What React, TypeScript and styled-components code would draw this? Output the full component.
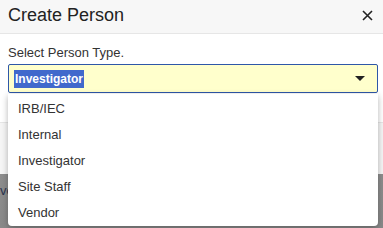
import styled, { createGlobalStyle } from 'styled-components';

const GlobalStyle = createGlobalStyle`
body {
  margin: 0;
  background: #8b8b8b;
  font-family: "Liberation Sans", Arial, sans-serif;
}
`;

const options = ['IRB/IEC', 'Internal', 'Investigator', 'Site Staff', 'Vendor'];

function App() {
  return (
    <>
      <GlobalStyle />
      <Page>
        <Modal>
          <Header>
            <Title>Create Person</Title>
            <CloseBtn aria-label="Close">
              <svg width="11" height="11" viewBox="0 0 11 11">
                <path d="M1 1L10 10M10 1L1 10" stroke="#222" strokeWidth="1.6" />
              </svg>
            </CloseBtn>
          </Header>
          <Body>
            <Label>Select Person Type.</Label>
            <SelectWrap>
              <SelectBox>
                <Selected>Investigator</Selected>
                <Caret />
              </SelectBox>
              <Menu>
                {options.map((o) => (
                  <Option key={o}>{o}</Option>
                ))}
              </Menu>
            </SelectWrap>
          </Body>
          <Footer />
        </Modal>
        <Backdrop>
          <BehindText>ve</BehindText>
        </Backdrop>
      </Page>
    </>
  );
}

const Page = styled.div`
width: 383px;
height: 228px;
overflow: hidden;
`;

const Modal = styled.div`
background: #fff;
`;

const Header = styled.div`
box-sizing: border-box;
height: 34px;
background: #f7f7f7;
border-bottom: 1px solid #e6e6e6;
display: flex;
align-items: center;
justify-content: space-between;
padding: 0 10px 0 8px;
`;

const Title = styled.h1`
margin: 0;
font-size: 18px;
font-weight: 400;
color: #222;
line-height: 20px;
margin-top: -4px;
`;

const CloseBtn = styled.button`
border: 0;
background: transparent;
padding: 0;
display: flex;
margin-top: -3px;
`;

const Body = styled.div`
padding: 11px 5px 29px 8px;
`;

const Label = styled.div`
font-size: 13px;
color: #333;
line-height: 16px;
margin-bottom: 3px;
`;

const SelectWrap = styled.div`
position: relative;
`;

const SelectBox = styled.div`
box-sizing: border-box;
height: 29px;
border: 1px solid #2e57a8;
border-radius: 2px;
background: #ffffcc;
display: flex;
align-items: center;
justify-content: space-between;
padding: 0 12px 0 5px;
`;

const Selected = styled.span`
background: #4169cc;
color: #fff;
font-weight: 700;
font-size: 12px;
line-height: 18px;
padding: 0 1px;
`;

const Caret = styled.span`
width: 0;
height: 0;
border-left: 5px solid transparent;
border-right: 5px solid transparent;
border-top: 5px solid #222;
`;

const Menu = styled.div`
position: absolute;
top: 30px;
left: 0;
right: 0;
background: #fff;
border-radius: 0 0 4px 4px;
box-shadow: 0 2px 6px rgba(0, 0, 0, 0.3);
padding: 1px 0 1px;
z-index: 2;
`;

const Option = styled.div`
height: 26px;
display: flex;
align-items: center;
padding-left: 10px;
font-size: 13px;
color: #333;
`;

const Footer = styled.div`
height: 51px;
background: #f5f5f5;
border-top: 1px solid #e6e6e6;
`;

const Backdrop = styled.div`
height: 60px;
background: linear-gradient(#8d8d8d, #888);
padding-top: 7px;
`;

const BehindText = styled.span`
font-size: 13px;
color: #2a3550;
`;

export default App;
